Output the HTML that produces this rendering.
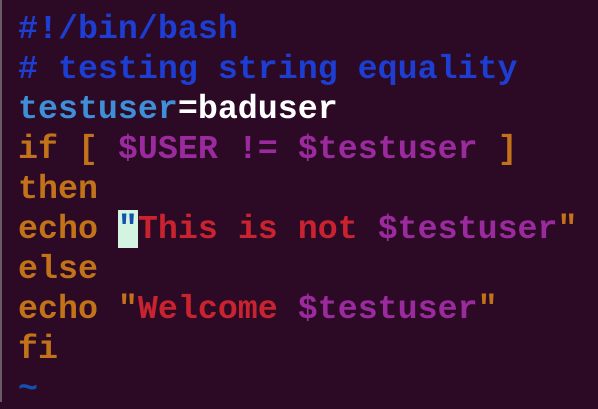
<!DOCTYPE html>
<html><head><style>
html,body{margin:0;padding:0;background:#2c0a25;width:598px;height:402px;overflow:hidden}
.l{position:absolute;left:0;top:0;width:2px;height:402px;background:#6a5a66}
pre{position:absolute;left:18px;top:9px;margin:0;font-family:"Liberation Mono",monospace;font-size:33.3px;line-height:40px;color:#fff;font-weight:bold;letter-spacing:0}
.c{color:#1c3ed2}.v{color:#3f8fd8}.o{color:#c27319}.p{color:#9a2a9e}.r{color:#c9232f}.t{color:#1450b0}
.cur{background:#d2f4e0;color:#1450b0}
</style></head><body><div class="l"></div>
<pre><span class="c">#!/bin/bash</span>
<span class="c"># testing string equality</span>
<span class="v">testuser</span>=baduser
<span class="o">if [ </span><span class="p">$USER</span><span class="o"> </span><span class="p">!=</span><span class="o"> </span><span class="p">$testuser</span><span class="o"> ]</span>
<span class="o">then</span>
<span class="o">echo </span><span class="cur">"</span><span class="r">This is not </span><span class="p">$testuser</span><span class="o">"</span>
<span class="o">else</span>
<span class="o">echo "</span><span class="r">Welcome </span><span class="p">$testuser</span><span class="o">"</span>
<span class="o">fi</span>
<span class="t">~</span></pre>
</body></html>
